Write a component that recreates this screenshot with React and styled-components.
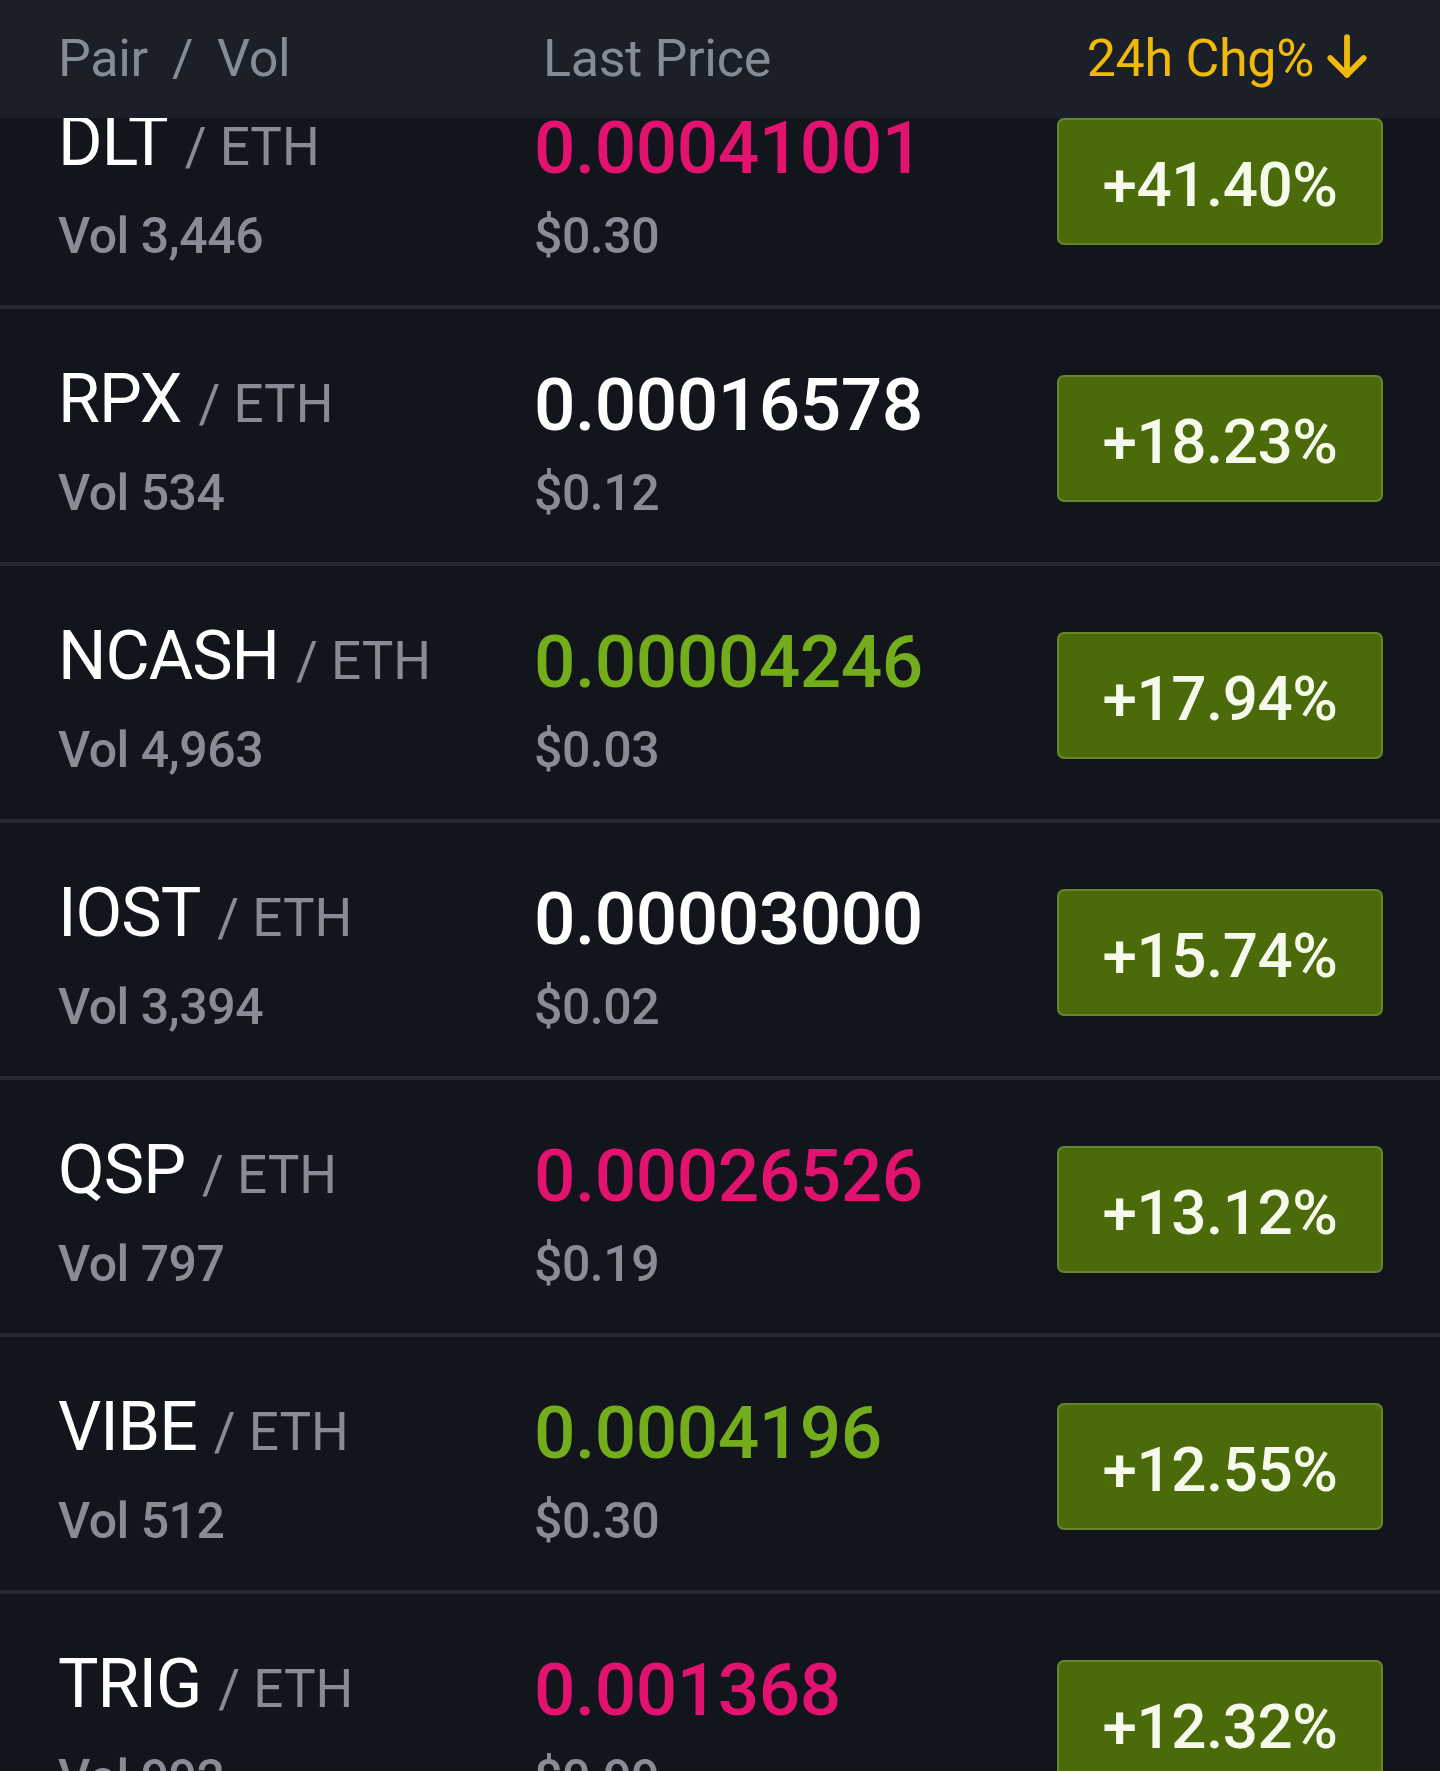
import React from "react";
import styled, { createGlobalStyle } from "styled-components";

const GlobalStyle = createGlobalStyle`
  html, body {
    margin: 0;
    padding: 0;
    background: #12151c;
    overflow: hidden;
  }
  body {
    font-family: Roboto, "Noto Sans", "Liberation Sans", sans-serif;
    -webkit-font-smoothing: antialiased;
  }
`;

const Page = styled.div`
  width: 1440px;
  min-height: 1771px;
  background: #12151c;
`;

const Header = styled.div`
  position: sticky;
  top: 0;
  z-index: 2;
  height: 118px;
  background: #1b1f28;
  display: grid;
  grid-template-columns: 485px 1fr auto;
  align-items: center;
  padding: 0 68px 0 58px;
  font-size: 52px;
  line-height: 118px;
  color: #858b97;
  letter-spacing: -0.3px;
`;

const HeadCell = styled.div`
  display: flex;
  align-items: center;
  color: ${(p) => (p.$active ? "#f0b90b" : "#858b97")};
`;

const Slash = styled.span`
  margin: 0 24px;
`;

const SortArrow = styled.svg`
  width: 50px;
  height: 50px;
  margin-left: 8px;
  margin-top: -6px;
`;

const List = styled.div`
  margin-top: -66px;
`;

const Row = styled.div`
  height: 253px;
  border-bottom: 4px solid #242831;
  display: grid;
  grid-template-columns: 476px 1fr 326px;
  align-items: start;
  padding: 0 57px 0 58px;
`;

const PairCell = styled.div`
  padding-top: 50px;
`;

const PairName = styled.div`
  font-size: 68px;
  line-height: 80px;
  color: #ffffff;
  letter-spacing: -1px;
  white-space: nowrap;
`;

const Quote = styled.span`
  font-size: 53px;
  line-height: 1;
  color: #868b96;
  margin-left: 17px;
  letter-spacing: 0;
`;

const SubText = styled.div`
  margin-top: ${(p) => p.$gap}px;
  font-size: 50px;
  font-weight: 500;
  line-height: 60px;
  color: #878c97;
  letter-spacing: -0.5px;
  white-space: nowrap;
`;

const PriceCell = styled.div`
  padding-top: 56px;
`;

const Price = styled.div`
  font-size: 73px;
  font-weight: 500;
  line-height: 80px;
  letter-spacing: -0.5px;
  white-space: nowrap;
  color: ${(p) =>
    p.$dir === "up" ? "#74ad1c" : p.$dir === "down" ? "#e2126f" : "#ffffff"};
`;

const Badge = styled.div`
  margin-top: 66px;
  height: 127px;
  box-sizing: border-box;
  border-radius: 7px;
  background: #4b6b0a;
  border: 2px solid #67862b;
  display: flex;
  align-items: center;
  justify-content: center;
  padding-top: 6px;
  color: #f6faec;
  font-size: 62px;
  font-weight: 500;
  letter-spacing: -0.5px;
`;

const rows = [
  { base: "DLT", vol: "3,446", price: "0.00041001", usd: "$0.30", dir: "down", chg: "+41.40%" },
  { base: "RPX", vol: "534", price: "0.00016578", usd: "$0.12", dir: "flat", chg: "+18.23%" },
  { base: "NCASH", vol: "4,963", price: "0.00004246", usd: "$0.03", dir: "up", chg: "+17.94%" },
  { base: "IOST", vol: "3,394", price: "0.00003000", usd: "$0.02", dir: "flat", chg: "+15.74%" },
  { base: "QSP", vol: "797", price: "0.00026526", usd: "$0.19", dir: "down", chg: "+13.12%" },
  { base: "VIBE", vol: "512", price: "0.0004196", usd: "$0.30", dir: "up", chg: "+12.55%" },
  { base: "TRIG", vol: "992", price: "0.001368", usd: "$0.99", dir: "down", chg: "+12.32%" },
];

export default function App() {
  return (
    <Page>
      <GlobalStyle />
      <Header>
        <HeadCell>
          Pair<Slash>/</Slash>Vol
        </HeadCell>
        <HeadCell>Last Price</HeadCell>
        <HeadCell $active>
          24h Chg%
          <SortArrow viewBox="0 0 24 24" fill="none" stroke="#f0b90b" strokeWidth="2.8" strokeLinecap="round" strokeLinejoin="round">
            <path d="M12 3 V21" />
            <path d="M4 13 L12 21 L20 13" />
          </SortArrow>
        </HeadCell>
      </Header>
      <List>
        {rows.map((r) => (
          <Row key={r.base}>
            <PairCell>
              <PairName>
                {r.base}
                <Quote>/ ETH</Quote>
              </PairName>
              <SubText $gap={24}>Vol {r.vol}</SubText>
            </PairCell>
            <PriceCell>
              <Price $dir={r.dir}>{r.price}</Price>
              <SubText $gap={18}>{r.usd}</SubText>
            </PriceCell>
            <Badge>{r.chg}</Badge>
          </Row>
        ))}
      </List>
    </Page>
  );
}
